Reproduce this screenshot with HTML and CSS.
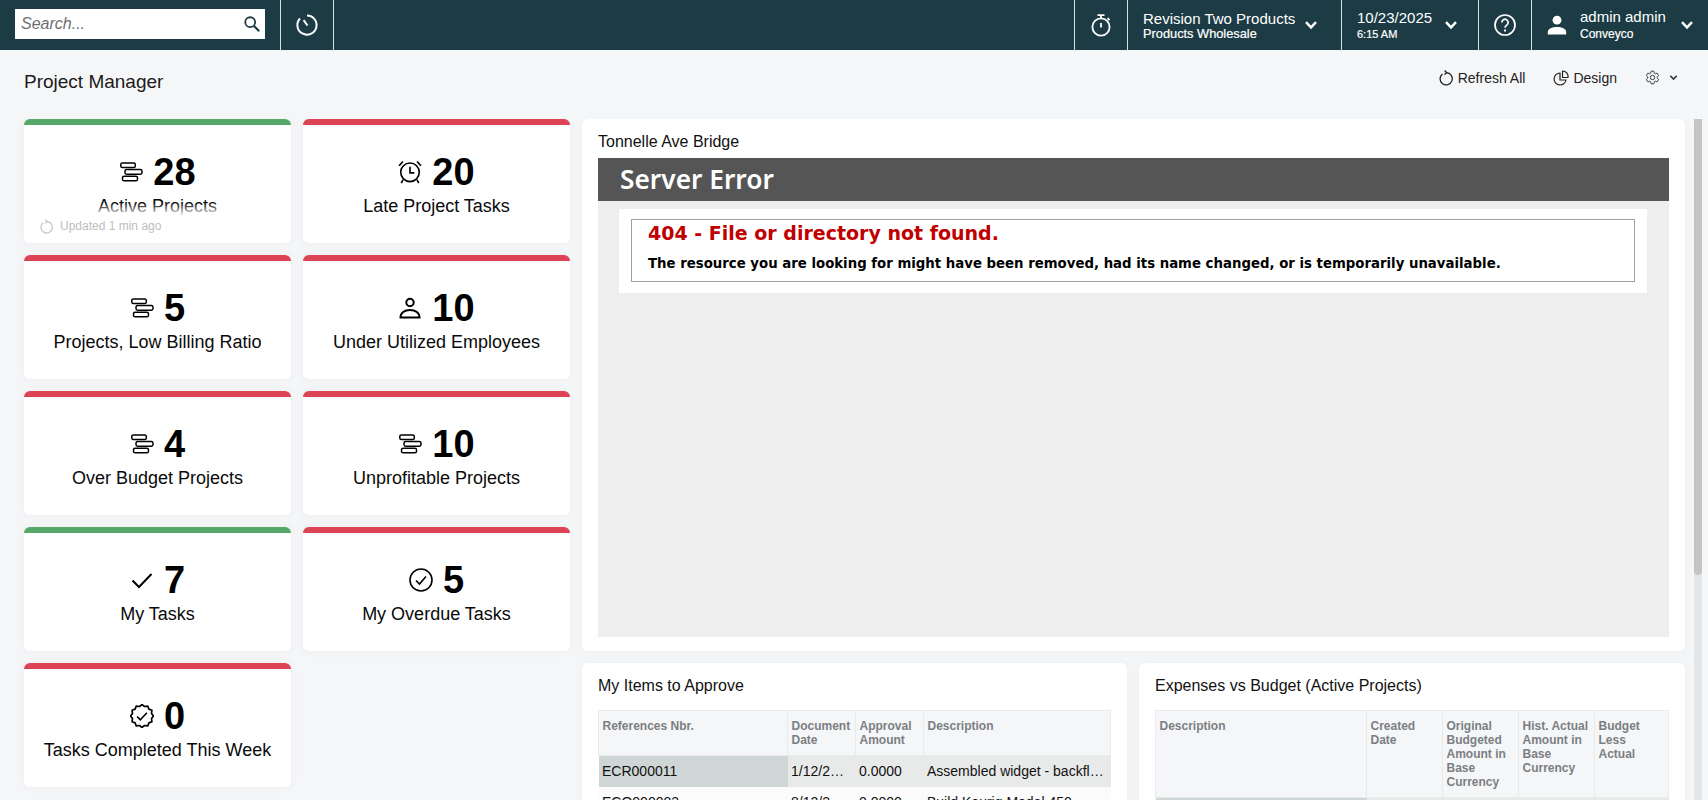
FILE: index.html
```html
<!DOCTYPE html>
<html lang="en">
<head>
<meta charset="utf-8">
<title>Project Manager</title>
<link rel="stylesheet" href="styles.css">
</head>
<body>
<svg class="sprite" aria-hidden="true">
  <symbol id="i-gantt" viewBox="0 0 24 20"><g fill="none" stroke="currentColor" stroke-width="1.5"><rect x="1.8" y="1" width="14.5" height="4.6" rx="1.6"/><rect x="6" y="7.6" width="17" height="4.6" rx="1.6"/><rect x="3.5" y="14.2" width="15" height="4.6" rx="1.6"/></g></symbol>
  <symbol id="i-caret" viewBox="0 0 14 10"><path d="M2 2.2 7 7.4 12 2.2" fill="none" stroke="currentColor" stroke-width="2.4"/></symbol>
  <symbol id="i-refresh" viewBox="0 0 16 16"><g fill="none" stroke="currentColor" stroke-width="1.3"><path d="M8.500 2.700A6.100 6.100 0 1 1 4.500 3.900"/><path d="M6.600 .5 8.800 2.700 6.400 4.500"/></g></symbol>
</svg>

<header class="topbar">
  <div class="search"><span class="search-text">Search...</span>
    <svg class="search-icon" viewBox="0 0 20 20"><circle cx="8" cy="8" r="5.5" fill="none" stroke="#1c3b44" stroke-width="2"/><path d="M12 12l6 6" stroke="#1c3b44" stroke-width="2.4"/></svg>
  </div>
  <div class="tb-cell tb-history">
    <svg class="tb-icon" viewBox="0 0 24 24" fill="none" stroke="#fff" stroke-width="2"><path d="M12 2.500a9.600 9.600 0 1 1-7 3"/><path d="M12.500 12.500 8.600 7.200"/></svg>
  </div>
  <div class="tb-spacer"></div>
  <div class="tb-cell tb-timer">
    <svg class="tb-icon" viewBox="0 0 24 24" fill="none" stroke="#fff" stroke-width="1.8"><circle cx="12" cy="14" r="8.600"/><path d="M8.500 2.200h7M12 2.200v3.200M12 10v4.500M18.500 5.200l2 2"/></svg>
  </div>
  <div class="tb-cell tb-company">
    <div class="tb-text"><span class="tb-line1">Revision Two Products</span><span class="tb-line2">Products Wholesale</span></div>
    <svg class="tb-caret"><use href="#i-caret"/></svg>
  </div>
  <div class="tb-cell tb-date">
    <div class="tb-text"><span class="tb-line1">10/23/2025</span><span class="tb-line2 tb-time">6:15 AM</span></div>
    <svg class="tb-caret"><use href="#i-caret"/></svg>
  </div>
  <div class="tb-cell tb-help">
    <svg class="tb-icon" viewBox="0 0 24 24" fill="none" stroke="#fff" stroke-width="1.7"><circle cx="12" cy="12" r="10"/><path d="M8.800 9.400a3.200 3.200 0 1 1 5 2.700c-1.200.8-1.800 1.400-1.800 2.700"/><path d="M12 16.500v2" stroke-width="2"/></svg>
  </div>
  <div class="tb-cell tb-user">
    <svg class="tb-user-icon" viewBox="0 0 20 20" fill="#fff"><circle cx="10" cy="5.200" r="4.400"/><path d="M.8 19.500v-2.500c0-3.200 4.500-5 9.200-5s9.200 1.800 9.200 5v2.500z"/></svg>
    <div class="tb-text"><span class="tb-line1 tb-name">admin admin</span><span class="tb-line2 tb-org">Conveyco</span></div>
    <svg class="tb-caret"><use href="#i-caret"/></svg>
  </div>
</header>

<main class="page">
  <div class="page-head">
    <h1 class="page-title">Project Manager</h1>
    <div class="actions">
      <span class="action"><svg class="action-icon"><use href="#i-refresh"/></svg>Refresh All</span>
      <span class="action"><svg class="action-icon" viewBox="0 0 16 16" fill="none" stroke="#222" stroke-width="1.200"><path d="M7 3a6 6 0 1 0 6 7H7z"/><path d="M9.500 1a5.600 5.600 0 0 1 5.500 6.500H9.500z"/></svg>Design</span>
      <span class="action action-gear"><svg class="gear-icon" viewBox="0 0 24 24" fill="none" stroke="#333" stroke-width="1.500"><path d="M19.430 12.980c.04-.32.07-.64.07-.98s-.03-.66-.07-.98l2.110-1.650c.19-.15.24-.42.12-.64l-2-3.460c-.12-.22-.39-.3-.61-.22l-2.490 1c-.52-.4-1.080-.73-1.690-.98l-.38-2.650C14.460 2.180 14.250 2 14 2h-4c-.25 0-.46.18-.49.42l-.38 2.650c-.61.25-1.170.59-1.690.98l-2.490-1c-.23-.09-.49 0-.61.22l-2 3.460c-.13.22-.07.49.12.64l2.110 1.650c-.04.32-.07.65-.07.98s.03.66.07.98l-2.110 1.650c-.19.15-.24.42-.12.64l2 3.460c.12.22.39.3.61.22l2.490-1c.52.4 1.080.73 1.690.98l.38 2.650c.03.24.24.42.49.42h4c.25 0 .46-.18.49-.42l.38-2.650c.61-.25 1.170-.59 1.690-.98l2.490 1c.23.09.49 0 .61-.22l2-3.460c.12-.22.07-.49-.12-.64l-2.110-1.650z"/><circle cx="12" cy="12" r="3.500"/></svg><svg class="gear-caret"><use href="#i-caret"/></svg></span>
    </div>
  </div>

  <div class="workspace">
    <div class="board">
      <section class="tiles">
        <article class="tile tile-good">
          <div class="tile-head"><svg class="tile-icon"><use href="#i-gantt"/></svg><span class="tile-num">28</span></div>
          <div class="tile-label">Active Projects</div>
          <div class="tile-updated"><svg class="updated-icon"><use href="#i-refresh"/></svg>Updated 1 min ago</div>
        </article>
        <article class="tile tile-bad">
          <div class="tile-head"><svg class="tile-icon" viewBox="1.200 1.200 21.600 22" fill="none" stroke="#000" stroke-width="1.500"><circle cx="12" cy="12.500" r="8.500"/><path d="M12 7.500v5.500h4M2 6.500 5.500 2.500M22 6.500 18.500 2.500M5.500 19.500 4 22.500M18.500 19.500 20 22.500"/></svg><span class="tile-num">20</span></div>
          <div class="tile-label">Late Project Tasks</div>
        </article>
        <article class="tile tile-bad">
          <div class="tile-head"><svg class="tile-icon"><use href="#i-gantt"/></svg><span class="tile-num">5</span></div>
          <div class="tile-label">Projects, Low Billing Ratio</div>
        </article>
        <article class="tile tile-bad">
          <div class="tile-head"><svg class="tile-icon" viewBox="0 0 24 24" fill="none" stroke="#000" stroke-width="2"><circle cx="12" cy="6.500" r="3.700"/><path d="M2.500 21.500c0-4.500 4-7.500 9.500-7.500s9.500 3 9.500 7.500z"/></svg><span class="tile-num">10</span></div>
          <div class="tile-label">Under Utilized Employees</div>
        </article>
        <article class="tile tile-bad">
          <div class="tile-head"><svg class="tile-icon"><use href="#i-gantt"/></svg><span class="tile-num">4</span></div>
          <div class="tile-label">Over Budget Projects</div>
        </article>
        <article class="tile tile-bad">
          <div class="tile-head"><svg class="tile-icon"><use href="#i-gantt"/></svg><span class="tile-num">10</span></div>
          <div class="tile-label">Unprofitable Projects</div>
        </article>
        <article class="tile tile-good">
          <div class="tile-head"><svg class="tile-icon" viewBox="0 0 24 24" fill="none" stroke="#000" stroke-width="2"><path d="M2.500 12.500 9 19 21.500 6"/></svg><span class="tile-num">7</span></div>
          <div class="tile-label">My Tasks</div>
        </article>
        <article class="tile tile-bad">
          <div class="tile-head"><svg class="tile-icon" viewBox="0 0 24 24" fill="none" stroke="#000" stroke-width="1.600"><circle cx="12" cy="12" r="11"/><path d="M7 12.500l3.500 3.500L17 8.500"/></svg><span class="tile-num">5</span></div>
          <div class="tile-label">My Overdue Tasks</div>
        </article>
        <article class="tile tile-bad">
          <div class="tile-head"><svg class="tile-icon" viewBox="1 1 22 22" fill="none" stroke="#000" stroke-width="1.500" stroke-linejoin="round"><path d="M12 1.500 14.300 3.300 17.300 2.900 18.300 5.700 21.100 6.800 20.700 9.800 22.500 12 20.700 14.200 21.100 17.200 18.300 18.300 17.300 21.100 14.300 20.700 12 22.500 9.700 20.700 6.700 21.100 5.700 18.300 2.900 17.200 3.300 14.200 1.500 12 3.300 9.800 2.900 6.800 5.700 5.700 6.700 2.900 9.700 3.300z"/><path d="M7.500 12.500l3 3 6-6.500"/></svg><span class="tile-num">0</span></div>
          <div class="tile-label">Tasks Completed This Week</div>
        </article>
      </section>

      <section class="panels">
        <article class="panel panel-wide">
          <h2 class="panel-title">Tonnelle Ave Bridge</h2>
          <div class="error-frame">
            <div class="error-head">Server Error</div>
            <div class="error-content">
              <div class="error-box">
                <h3 class="error-code">404 - File or directory not found.</h3>
                <p class="error-msg">The resource you are looking for might have been removed, had its name changed, or is temporarily unavailable.</p>
              </div>
            </div>
          </div>
        </article>

        <article class="panel">
          <h2 class="panel-title">My Items to Approve</h2>
          <table class="grid grid-approve">
            <thead><tr><th>References Nbr.</th><th>Document Date</th><th>Approval Amount</th><th>Description</th></tr></thead>
            <tbody>
              <tr class="row-selected"><td class="cell-selected">ECR000011</td><td>1/12/2025</td><td>0.0000</td><td>Assembled widget - backflow valve</td></tr>
              <tr><td>ECO000003</td><td>8/12/2025</td><td>0.0000</td><td>Build Keurig Model 450</td></tr>
            </tbody>
          </table>
        </article>

        <article class="panel">
          <h2 class="panel-title">Expenses vs Budget (Active Projects)</h2>
          <table class="grid grid-budget">
            <thead><tr><th>Description</th><th>Created Date</th><th>Original Budgeted Amount in Base Currency</th><th>Hist. Actual Amount in Base Currency</th><th>Budget Less Actual</th></tr></thead>
            <tbody>
              <tr class="row-selected"><td class="cell-selected">&nbsp;</td><td></td><td></td><td></td><td></td></tr>
            </tbody>
          </table>
        </article>
      </section>
    </div>
    <div class="scrolltrack"><div class="scrollthumb"></div></div>
  </div>
</main>
</body>
</html>
```

FILE: styles.css
```css
* { box-sizing: border-box; }
html, body { height: 100%; }
body {
  margin: 0;
  height: 800px;
  overflow: hidden;
  display: flex;
  flex-direction: column;
  background: #f5f6f8;
  color: #000;
  font-family: "Liberation Sans", Arial, sans-serif;
}
.sprite { display: none; }

/* top bar */
.topbar {
  flex: none;
  height: 50px;
  display: flex;
  align-items: stretch;
  background: #1c3b44;
  color: #fff;
}
.search {
  width: 250px;
  height: 30px;
  margin: 9px 15px 11px;
  padding: 0 4px 0 6px;
  display: flex;
  align-items: center;
  justify-content: space-between;
  background: #fff;
}
.search-text { font-size: 16px; font-style: italic; color: #6f6f6f; }
.search-icon { width: 18px; height: 18px; }
.tb-cell {
  display: flex;
  align-items: center;
  border-left: 1px solid #d8dfe1;
}
.tb-history { width: 54px; justify-content: center; border-right: 1px solid #d8dfe1; }
.tb-spacer { flex: 1; }
.tb-icon { width: 24px; height: 24px; }
.tb-timer { width: 53px; justify-content: center; }
.tb-company { width: 214px; padding-left: 15px; }
.tb-date { width: 137px; padding-left: 15px; }
.tb-help { width: 53px; justify-content: center; }
.tb-user { width: 177px; padding-left: 15px; }
.tb-text { display: flex; flex-direction: column; flex: 1; }
.tb-line1 { font-size: 15px; line-height: 17px; }
.tb-line2 { font-size: 12.800px; line-height: 14px; -webkit-text-stroke: .2px #fff; }
.tb-time { font-size: 11px; margin-top: 1px; }
.tb-org { font-size: 12px; }
.tb-name { margin-top: -2px; margin-bottom: 2px; }
.tb-caret { width: 14px; height: 10px; margin-right: 23px; flex: none; color: #fff; }
.tb-date .tb-caret { margin-right: 20px; }
.tb-user .tb-caret { margin-right: 14px; }
.tb-user-icon { width: 20px; height: 20px; margin-right: 13px; flex: none; }

/* page */
.page { flex: 1; min-height: 0; display: flex; flex-direction: column; }
.page-head {
  flex: none;
  height: 69px;
  padding: 0 30px 8px 24px;
  display: flex;
  align-items: center;
  justify-content: space-between;
}
.page-title { margin: 0 0 -2px; font-size: 19px; font-weight: normal; color: #1a1a1a; }
.actions { display: flex; align-items: center; gap: 28px; margin-top: -6px; }
.action { display: flex; align-items: center; font-size: 14px; color: #222; }
.action-icon { width: 16px; height: 16px; margin-right: 4px; color: #222; }
.gear-icon { width: 15px; height: 15px; margin-right: 9px; }
.gear-caret { width: 9px; height: 7px; color: #333; }

.workspace { flex: 1; min-height: 0; display: flex; padding-left: 24px; overflow: hidden; }
.board { width: 1661px; flex: none; display: flex; align-items: flex-start; gap: 12px; }
.scrolltrack { width: 8px; margin: -6px 0 0 9px; background: #e4e6e8; flex: none; }
.scrollthumb { height: 462px; background: #c4c4c4; border-radius: 4px 4px 6px 6px; }

/* tiles */
.tiles {
  width: 546px;
  flex: none;
  display: grid;
  grid-template-columns: 267px 267px;
  grid-auto-rows: 124px;
  gap: 12px;
}
.tile {
  position: relative;
  background: #fff;
  border-top: 6px solid;
  border-radius: 6px;
  box-shadow: 0 0 10px rgba(60, 70, 80, .05);
  display: flex;
  flex-direction: column;
  align-items: center;
  justify-content: center;
  padding: 4px 0 1px;
}
.tile-good { border-top-color: #55a868; }
.tile-bad { border-top-color: #dc4455; }
.tile-head { display: flex; align-items: center; justify-content: center; gap: 10px; height: 40px; }
.tile-icon { width: 24px; height: 24px; color: #000; flex: none; }
.tile-num { font-size: 38px; line-height: 40px; font-weight: bold; }
.tile-label { margin-top: 2px; font-size: 18px; line-height: 25px; color: #0a0a0a; }
.tile-updated {
  position: absolute;
  left: 0;
  right: 0;
  bottom: 0;
  height: 40px;
  padding: 16px 0 0 15px;
  display: flex;
  align-items: flex-start;
  font-size: 12px;
  line-height: 15px;
  color: #bdbdbd;
  border-radius: 0 0 6px 6px;
  background: linear-gradient(to bottom, rgba(255,255,255,0) 0, #fff 13px);
}
.updated-icon { width: 15px; height: 15px; margin-right: 6px; color: #c4c4c4; }

/* panels */
.panels {
  flex: 1;
  min-width: 0;
  display: grid;
  grid-template-columns: 545px 546px;
  gap: 12px;
}
.panel {
  background: #fff;
  border-radius: 6px;
  box-shadow: 0 0 10px rgba(60, 70, 80, .05);
  padding: 13px 16px 16px;
}
.panel-wide { grid-column: 1 / -1; height: 532px; padding-bottom: 14px; display: flex; flex-direction: column; }
.panel-title { margin: 0 0 14px; font-size: 16px; line-height: 20px; font-weight: normal; color: #111; }
.panel-wide .panel-title { margin-bottom: 6px; }

/* embedded error page */
.error-frame { flex: 1; background: #eee; }
.error-head {
  height: 43px;
  padding-left: 22px;
  background: #555;
  color: #fff;
  font-family: "Noto Sans", sans-serif;
  font-size: 26.300px;
  font-weight: 600;
  line-height: 43px;
}
.error-content { margin: 8px 22px 0 21px; padding: 10px 12px 11px; background: #fff; }
.error-box { height: 63px; padding: 1px 16px 0; border: 1px solid #a0a0a0; font-family: "DejaVu Sans", Verdana, sans-serif; }
.error-code { margin: 0; font-size: 19px; line-height: 24px; font-weight: bold; color: #c00000; }
.error-msg { margin: 10px 0 0; font-size: 13.300px; line-height: 17px; font-weight: bold; color: #000; }

/* tables */
.grid { width: 100%; table-layout: fixed; border-collapse: collapse; font-size: 14px; }
.grid th {
  padding: 8px 2px 8px 3.500px;
  background: #f5f6f8;
  border: 1px solid #e8eaec;
  color: #7b7f83;
  font-size: 12px;
  line-height: 14px;
  font-weight: bold;
  text-align: left;
  vertical-align: top;
}
.grid td {
  height: 31px;
  padding: 0 6px 0 3.500px;
  white-space: nowrap;
  overflow: hidden;
  text-overflow: ellipsis;
  background: #fbfbfb;
  color: #111;
}
.row-selected td { background: #e8eaea; }
.row-selected .cell-selected { background: #cfd6d6; }
.grid-approve th:nth-child(1) { width: 189px; }
.grid-approve th:nth-child(2),
.grid-approve th:nth-child(3) { width: 68px; }
.grid-budget th:nth-child(1) { width: 211px; }
.grid-budget th:nth-child(n+2) { width: 76px; }
.grid-budget th:last-child { width: auto; padding-right: 14px; }
```
